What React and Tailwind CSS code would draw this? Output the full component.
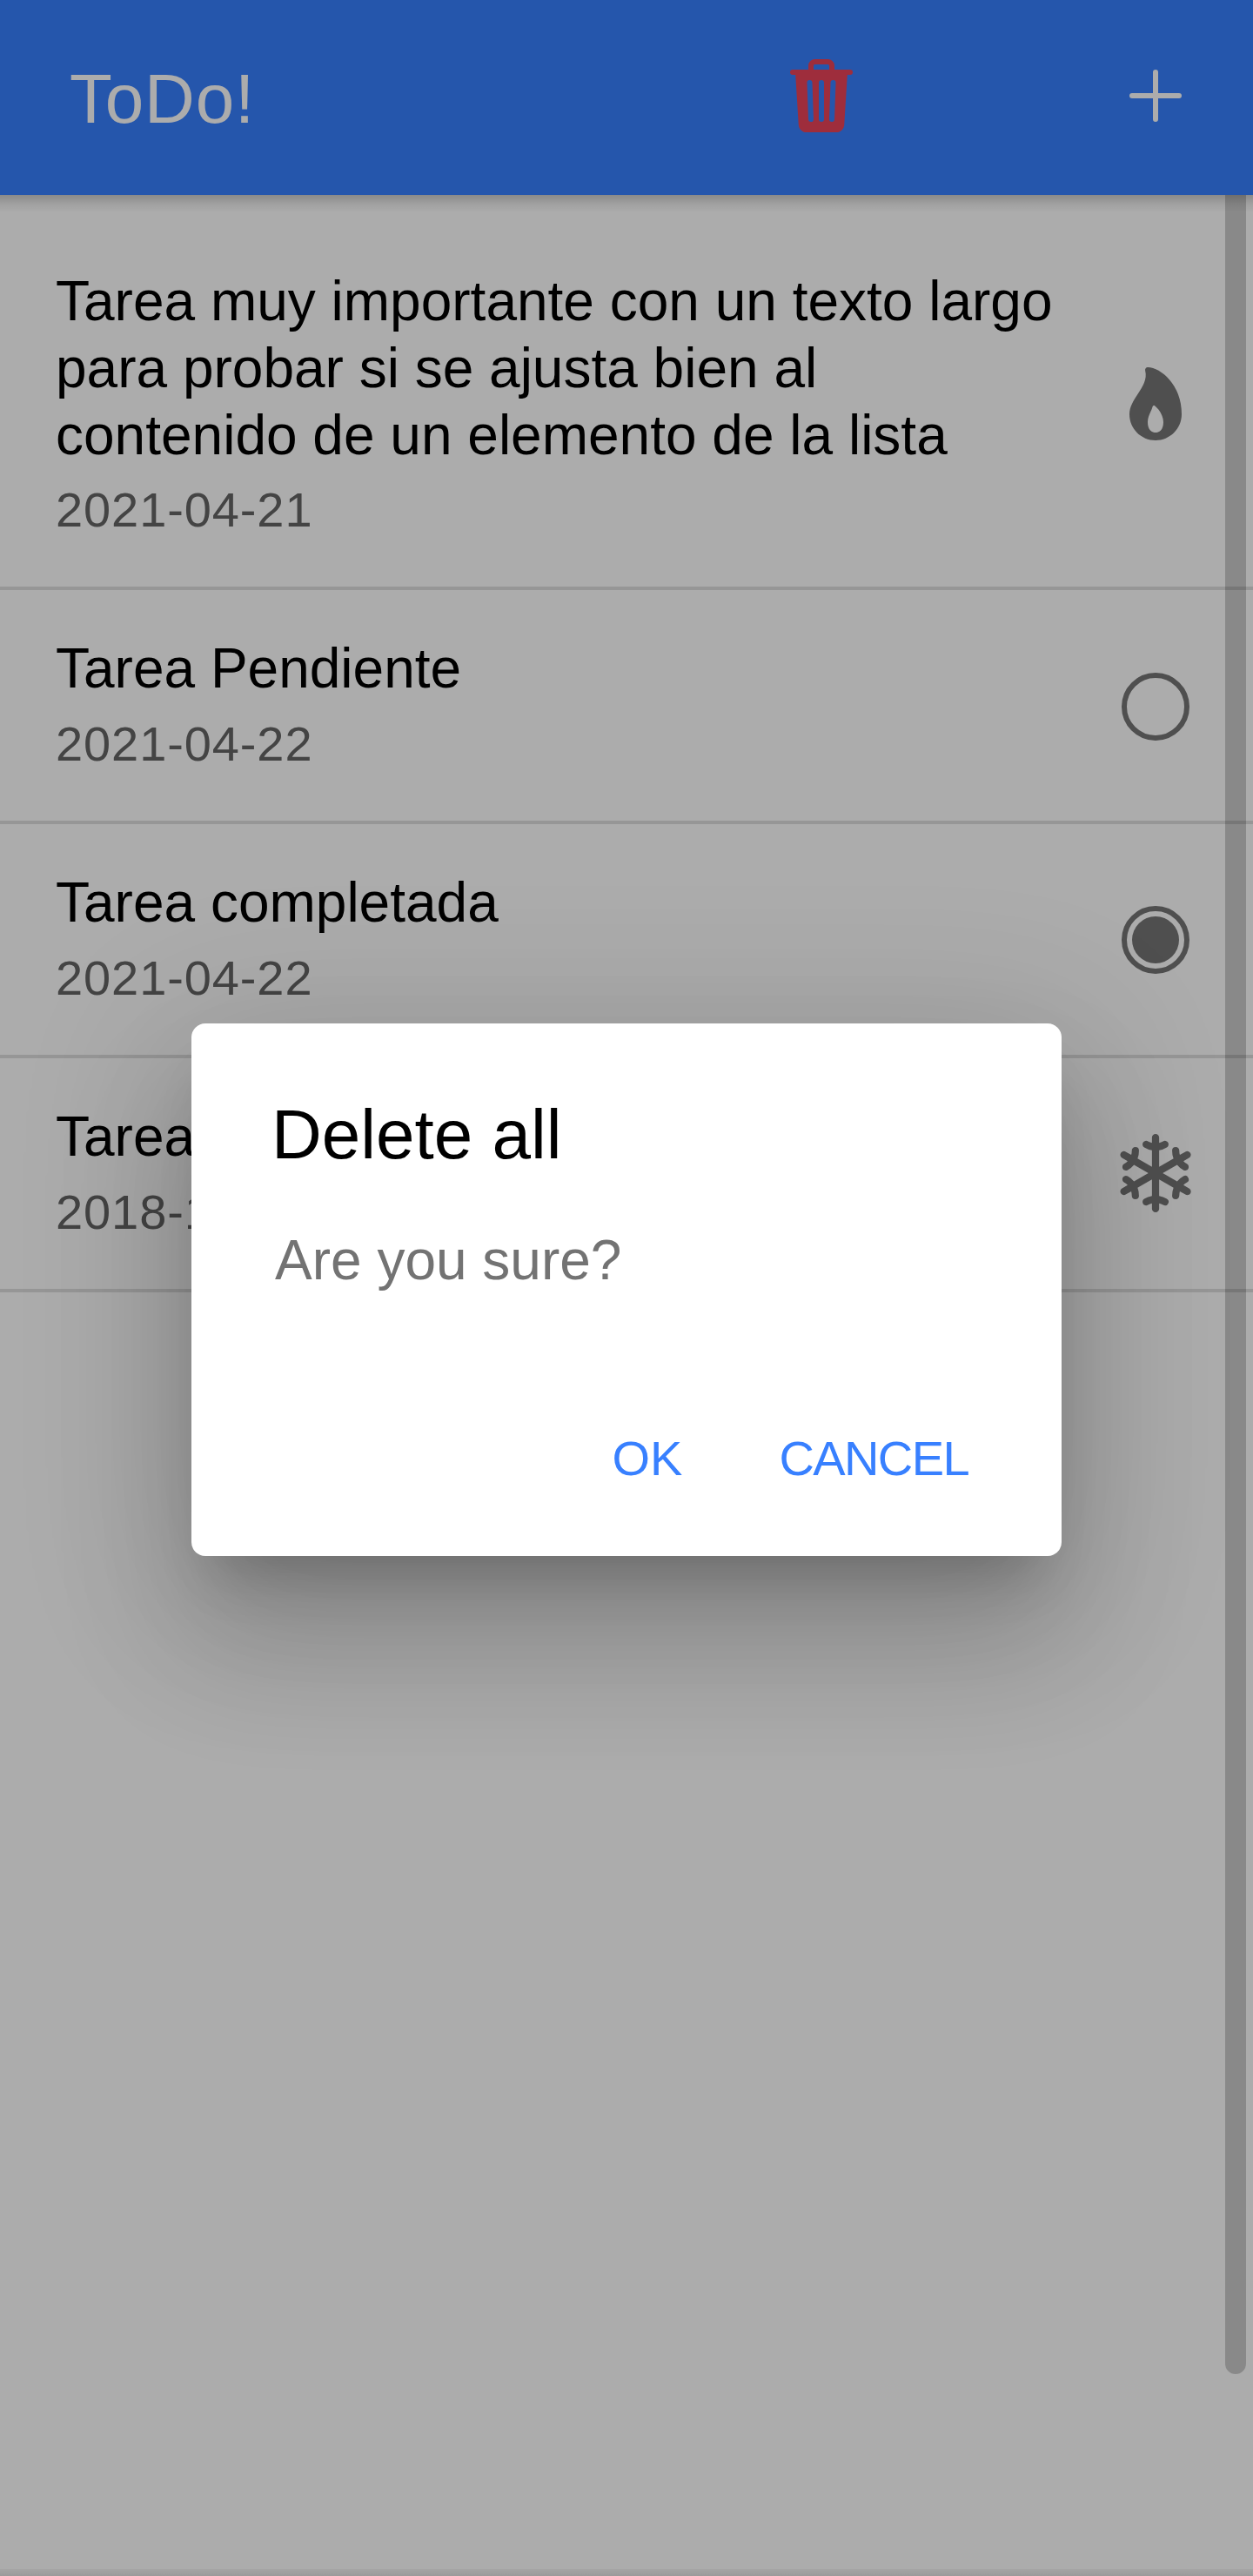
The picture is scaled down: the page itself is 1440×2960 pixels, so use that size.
import { IoAdd, IoEllipseOutline, IoFlame, IoRadioButtonOn, IoSnow, IoTrash } from "react-icons/io5";

const tasks = [
  {
    title: "Tarea muy importante con un texto largo para probar si se ajusta bien al contenido de un elemento de la lista",
    date: "2021-04-21",
    Icon: IoFlame,
    nudge: "mb-[2px]",
  },
  { title: "Tarea Pendiente", date: "2021-04-22", Icon: IoEllipseOutline, nudge: "mt-[2px]" },
  { title: "Tarea completada", date: "2021-04-22", Icon: IoRadioButtonOn, nudge: "mt-0" },
  { title: "Tarea congelada", date: "2018-12-22", Icon: IoSnow, nudge: "mt-0" },
];

function Header() {
  return (
    <header className="relative z-10 flex h-[224px] items-center bg-[#3880ff] pr-16 pl-20 text-white">
      <h1 className="flex-1 pt-1 text-[80px] leading-[96px] tracking-[0.8px]">ToDo!</h1>
      <button className="mr-[288px] mb-1 text-[#eb445a]" aria-label="Delete all tasks">
        <IoTrash className="size-24" />
      </button>
      <button className="mb-1" aria-label="Add task">
        <IoAdd className="size-24" />
      </button>
      <div className="absolute inset-x-0 top-full h-5 bg-linear-to-b from-black/20 via-black/7 to-transparent" />
    </header>
  );
}

function TaskItem({ title, date, Icon, nudge }) {
  return (
    <li className="flex items-center border-b-4 border-black/13 pr-16 pl-16">
      <div className="mt-[44px] mr-[32px] mb-[40px] flex-1">
        <h2 className="my-2 text-[64px] leading-[76.8px] text-black">{title}</h2>
        <p className="mb-2 text-[56px] leading-[80px] tracking-[0.9px] text-[#666666]">{date}</p>
      </div>
      <div className={`ml-[32px] ${nudge}`}>
        <Icon className="size-24 text-[#757575]" />
      </div>
    </li>
  );
}

function Alert() {
  return (
    <div
      role="alertdialog"
      className="flex h-[612px] w-[1000px] flex-col rounded-[16px] bg-white pt-20 shadow-[0_44px_60px_-28px_rgba(0,0,0,0.2),0_96px_152px_12px_rgba(0,0,0,0.14),0_36px_184px_32px_rgba(0,0,0,0.12)]"
    >
      <h2 className="px-[92px] text-[80px] leading-[96px] text-black">Delete all</h2>
      <p className="mt-[56px] px-24 text-[64px] leading-[80px] text-[#737373]">Are you sure?</p>
      <div className="mt-auto mb-[72px] flex justify-end gap-[111px] pr-[107px] text-[56px] leading-[80px] text-[#3880ff]">
        <button>OK</button>
        <button className="tracking-[-1.6px]">CANCEL</button>
      </div>
    </div>
  );
}

export default function App() {
  return (
    <div className="relative flex h-[2960px] w-[1440px] flex-col overflow-hidden bg-white font-['Liberation_Sans',Arial,sans-serif]">
      <Header />
      <main className="relative flex-1 pt-8">
        <ul>
          {tasks.map((task) => (
            <TaskItem key={task.title} {...task} />
          ))}
        </ul>
        <div className="absolute top-0 right-2 h-[2504px] w-6 rounded-b-full bg-black/20" />
      </main>
      <div className="h-2 bg-linear-to-b from-black/4 to-black/10" />
      <div className="absolute inset-0 z-20 grid place-items-center bg-black/[0.325] pt-1">
        <Alert />
      </div>
    </div>
  );
}
